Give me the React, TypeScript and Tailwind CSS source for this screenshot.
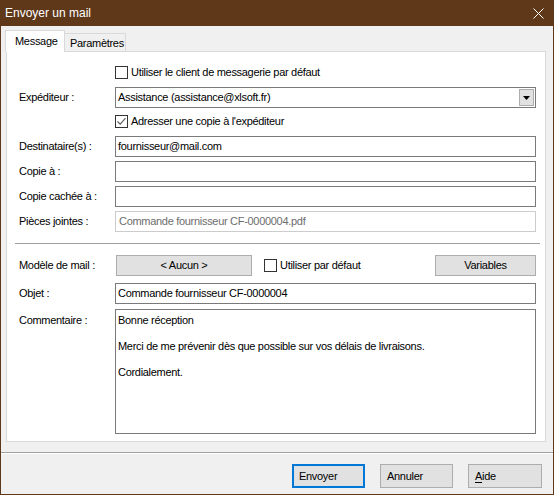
import React from "react";

function Checkbox({ checked = false }: { checked?: boolean }) {
  return (
    <div className="w-[13px] h-[13px] border border-[#333333] bg-white flex items-center justify-center shrink-0">
      {checked && (
        <svg width="11" height="11" viewBox="0 0 11 11">
          <path d="M1.5 5.5 L4.2 8.2 L9.5 2.2" stroke="#5a5a5a" strokeWidth="1.1" fill="none" />
        </svg>
      )}
    </div>
  );
}

function Row({ label, children, className = "" }: { label?: string; children: React.ReactNode; className?: string }) {
  return (
    <div className={"flex items-center h-[21px] " + className}>
      <div className="w-[96px] shrink-0">{label}</div>
      <div className="flex-1 flex items-center h-full">{children}</div>
    </div>
  );
}

function Input({ value = "", disabled = false }: { value?: string; disabled?: boolean }) {
  return (
    <div
      className={
        "flex-1 h-[21px] border bg-white flex items-center pl-[2px] " +
        (disabled ? "border-[#cccccc] text-[#6d6d6d]" : "border-[#7a7a7a] text-black")
      }
    >
      {value}
    </div>
  );
}

export default function App() {
  return (
    <div className="w-[554px] h-[495px] flex flex-col bg-[#5f3719] font-['Liberation_Sans',sans-serif] text-[11px] tracking-[-0.3px] text-black leading-[13px]">
      {/* Title bar */}
      <div className="h-[26px] shrink-0 flex items-center justify-between pl-[5px] pr-[10px] text-white">
        <span className="text-[12px] tracking-normal">Envoyer un mail</span>
        <svg width="11" height="11" viewBox="0 0 11 11">
          <path d="M0.5 0.5 L10.5 10.5 M10.5 0.5 L0.5 10.5" stroke="#ffffff" strokeWidth="1" fill="none" />
        </svg>
      </div>
      {/* Body */}
      <div className="flex-1 mx-[1px] mb-[1px] bg-[#f0f0f0] flex flex-col">
        {/* Tabs */}
        <div className="mt-[4px] ml-[4px] h-[22px] flex items-start">
          <div className="relative z-10 h-[22px] w-[60px] bg-white border-l border-t border-r border-[#d9d9d9] pl-[9px] pt-[4px]">
            Message
          </div>
          <div className="mt-[3px] h-[18px] w-[62px] -ml-px border-l border-t border-r border-[#d9d9d9] bg-[#f0f0f0] pl-[5px] pt-[3px]">
            Paramètres
          </div>
        </div>
        {/* Panel */}
        <div className="-mt-px ml-[5px] w-[540px] h-[391px] bg-white border border-[#d9d9d9] flex flex-col pl-[12px] pr-[9px] pt-[10px]">
          <Row>
            <div className="flex items-center gap-[3px]">
              <Checkbox />
              <span>Utiliser le client de messagerie par défaut</span>
            </div>
          </Row>
          <Row label="Expéditeur :" className="mt-[4px]">
            <div className="flex-1 h-[21px] border border-[#7a7a7a] bg-white flex items-center justify-between pl-[2px] pr-[1px]">
              <span>Assistance (assistance@xlsoft.fr)</span>
              <div className="w-[15px] h-[17px] bg-[#e1e1e1] border border-[#adadad] flex items-center justify-center">
                <svg width="7" height="4" viewBox="0 0 7 4">
                  <path d="M0 0 H7 L3.5 4 Z" fill="#000000" />
                </svg>
              </div>
            </div>
          </Row>
          <Row className="mt-[3px]">
            <div className="flex items-center gap-[3px]">
              <Checkbox checked />
              <span>Adresser une copie à l'expéditeur</span>
            </div>
          </Row>
          <Row label="Destinataire(s) :" className="mt-[4px]">
            <Input value="fournisseur@mail.com" />
          </Row>
          <Row label="Copie à :" className="mt-[4px]">
            <Input />
          </Row>
          <Row label="Copie cachée à :" className="mt-[4px]">
            <Input />
          </Row>
          <Row label="Pièces jointes :" className="mt-[4px]">
            <div className="flex-1 h-[21px] border border-[#cccccc] bg-white text-[#6d6d6d] flex items-center pl-[3px]">
              Commande fournisseur CF-0000004.pdf
            </div>
          </Row>
          <div className="mt-[11px] -ml-[4px] mr-[-4px] h-px bg-[#a0a0a0]" />
          <Row label="Modèle de mail :" className="mt-[11px]">
            <div className="ml-[1px] w-[136px] h-[21px] bg-[#e1e1e1] border border-[#adadad] flex items-center justify-center">
              &lt; Aucun &gt;
            </div>
            <div className="ml-[12px] flex items-center gap-[3px]">
              <Checkbox />
              <span>Utiliser par défaut</span>
            </div>
            <div className="ml-auto w-[101px] h-[21px] bg-[#e1e1e1] border border-[#adadad] flex items-center justify-center">
              Variables
            </div>
          </Row>
          <Row label="Objet :" className="mt-[7px]">
            <Input value="Commande fournisseur CF-0000004" />
          </Row>
          <div className="mt-[5px] flex items-start h-[125px]">
            <div className="w-[96px] shrink-0 pt-[5px]">Commentaire :</div>
            <div className="flex-1 h-full border border-[#7a7a7a] bg-white pl-[2px] pt-[4px]">
              <div>Bonne réception</div>
              <div>&nbsp;</div>
              <div>Merci de me prévenir dès que possible sur vos délais de livraisons.</div>
              <div>&nbsp;</div>
              <div>Cordialement.</div>
            </div>
          </div>
        </div>
        {/* Separator */}
        <div className="mt-[10px] h-px bg-[#a0a0a0]" />
        <div className="h-px bg-white" />
        {/* Footer */}
        <div className="flex-1 flex justify-end items-start pt-[10px] pr-[11px] gap-[15px]">
          <div className="w-[73px] h-[24px] bg-[#e1e1e1] border-2 border-[#0078d7] flex items-center pl-[5px]">
            Envoyer
          </div>
          <div className="w-[73px] h-[24px] bg-[#e1e1e1] border border-[#adadad] flex items-center pl-[6px]">
            Annuler
          </div>
          <div className="w-[74px] h-[24px] bg-[#e1e1e1] border border-[#adadad] flex items-center pl-[6px]">
            <span className="underline underline-offset-2">A</span>ide
          </div>
        </div>
      </div>
    </div>
  );
}
